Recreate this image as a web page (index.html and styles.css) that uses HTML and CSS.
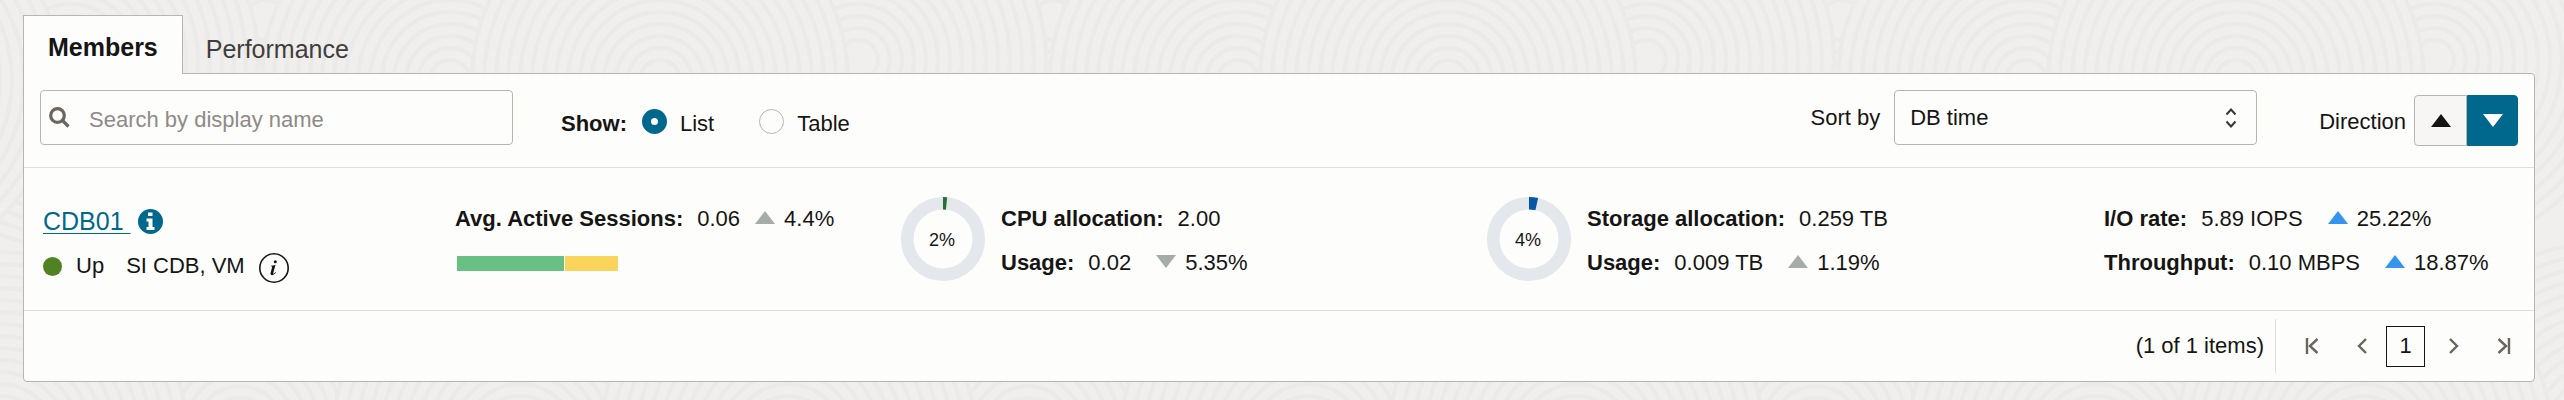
FILE: index.html
```html
<!DOCTYPE html>
<html lang="en">
<head>
<meta charset="utf-8">
<title>Members</title>
<link rel="stylesheet" href="styles.css">
</head>
<body>
<main class="page">
  <div class="tabs" role="tablist">
    <button class="tab tab-active" role="tab" aria-selected="true">Members</button>
    <button class="tab" role="tab" aria-selected="false">Performance</button>
  </div>
  <section class="panel">
    <div class="toolbar">
      <div class="search">
        <svg class="search-icon" viewBox="0 0 21 21" aria-hidden="true"><circle cx="8.500" cy="8.500" r="6.800"/><path d="M13.500 13.500 19.500 19.500"/></svg>
        <input class="search-input" type="text" placeholder="Search by display name" aria-label="Search by display name">
      </div>
      <div class="show" role="radiogroup" aria-labelledby="show-label">
        <span class="bold" id="show-label">Show:</span>
        <label class="option"><input class="radio" type="radio" name="view" checked>List</label>
        <label class="option"><input class="radio" type="radio" name="view">Table</label>
      </div>
      <div class="sort">
        <label for="sort">Sort by</label>
        <div class="select-wrap">
          <select class="select" id="sort"><option>DB time</option></select>
          <svg class="select-icon" viewBox="0 0 12 20" aria-hidden="true"><path d="M1.500 6.500 6 1.500l4.500 5M1.500 13.500l4.500 5 4.500-5"/></svg>
        </div>
      </div>
      <div class="direction">
        <span class="direction-label">Direction</span>
        <div class="toggle">
          <button class="toggle-btn" aria-label="Ascending"><svg class="tri" viewBox="0 0 20 13"><path d="M10 0 20 13H0z"/></svg></button>
          <button class="toggle-btn toggle-on" aria-label="Descending"><svg class="tri" viewBox="0 0 20 13"><path d="M0 0h20L10 13z"/></svg></button>
        </div>
      </div>
    </div>

    <div class="member">
      <div class="identity">
        <div class="name-line">
          <a class="name" href="#">CDB01&nbsp;</a>
          <svg class="info-solid" viewBox="0 0 25 25" aria-hidden="true"><circle cx="12.500" cy="12.500" r="12.500"/><path d="M10 3.500h4.500v3.500H10zM8.500 9.500h6v8.500h2v3h-8v-3h2v-5.500h-2z"/></svg>
        </div>
        <div class="status-line">
          <span class="dot"></span><span class="status">Up</span><span>SI CDB, VM</span>
          <svg class="info-ring" viewBox="0 0 30 30" aria-hidden="true"><circle cx="15" cy="15" r="14.200"/><path d="M12 12.800q2.500-.2 4.500-1.100l-2.200 8q-.3 1.300.6.900.8-.4 1.700-1.700l.6.400q-1.900 2.900-3.900 2.900-2.300-.1-1.700-2.400l1.500-5.500q.2-.9-1.200-1z"/><circle class="info-point" cx="16.300" cy="8.800" r="1.500"/></svg>
        </div>
      </div>
      <div class="metric">
        <div class="line"><span class="bold">Avg. Active Sessions:</span><span class="value">0.06</span><span class="trend trend-near"><svg class="tri gray" viewBox="0 0 20 13"><path d="M10 0 20 13H0z"/></svg>4.4%</span></div>
        <div class="line"><span class="bar"><span class="bar-green"></span><span class="bar-yellow"></span></span></div>
      </div>
      <div class="metric-donut">
        <svg class="donut" viewBox="0 0 84 84" role="img"><circle class="ring" cx="42" cy="42" r="35.700"/><circle class="arc arc-green" cx="42" cy="42" r="35.700" pathLength="100" stroke-dasharray="1.600 98.400" transform="rotate(-90 42 42)"/><text class="donut-text" x="41" y="49">2%</text></svg>
        <div class="metric">
          <div class="line"><span class="bold">CPU allocation:</span><span class="value">2.00</span></div>
          <div class="line"><span class="bold">Usage:</span><span class="value">0.02</span><span class="trend"><svg class="tri gray" viewBox="0 0 20 13"><path d="M0 0h20L10 13z"/></svg>5.35%</span></div>
        </div>
      </div>
      <div class="metric-donut">
        <svg class="donut" viewBox="0 0 84 84" role="img"><circle class="ring" cx="42" cy="42" r="35.700"/><circle class="arc arc-blue" cx="42" cy="42" r="35.700" pathLength="100" stroke-dasharray="3.500 96.500" transform="rotate(-90 42 42)"/><text class="donut-text" x="41" y="49">4%</text></svg>
        <div class="metric">
          <div class="line"><span class="bold">Storage allocation:</span><span class="value">0.259 TB</span></div>
          <div class="line"><span class="bold">Usage:</span><span class="value">0.009 TB</span><span class="trend"><svg class="tri gray" viewBox="0 0 20 13"><path d="M10 0 20 13H0z"/></svg>1.19%</span></div>
        </div>
      </div>
      <div class="metric">
        <div class="line"><span class="bold">I/O rate:</span><span class="value">5.89 IOPS</span><span class="trend"><svg class="tri blue" viewBox="0 0 20 13"><path d="M10 0 20 13H0z"/></svg>25.22%</span></div>
        <div class="line"><span class="bold">Throughput:</span><span class="value">0.10 MBPS</span><span class="trend"><svg class="tri blue" viewBox="0 0 20 13"><path d="M10 0 20 13H0z"/></svg>18.87%</span></div>
      </div>
    </div>

    <nav class="pager" aria-label="Pagination">
      <span class="pager-count">(1 of 1 items)</span>
      <div class="pager-nav">
        <button class="page-btn" aria-label="First page"><svg class="page-icon" viewBox="0 0 14 16"><path d="M3 0v16M13.500 1 6 8l7.500 7"/></svg></button>
        <button class="page-btn" aria-label="Previous page"><svg class="page-icon" viewBox="0 0 14 16"><path d="M12 1 5 8l7 7"/></svg></button>
        <button class="page-current" aria-current="page">1</button>
        <button class="page-btn" aria-label="Next page"><svg class="page-icon" viewBox="0 0 14 16"><path d="M3 1l7 7-7 7"/></svg></button>
        <button class="page-btn" aria-label="Last page"><svg class="page-icon" viewBox="0 0 14 16"><path d="M12 0v16M1.500 1 9 8l-7.500 7"/></svg></button>
      </div>
    </nav>
  </section>
</main>
</body>
</html>
```
FILE: styles.css
```css
* { box-sizing: border-box; }

body {
  margin: 0;
  min-height: 100vh;
  color: #161513;
  font: 22px/44px "Liberation Sans", Arial, sans-serif;
  background-color: #f0efee;
  background-image: url("data:image/svg+xml,%3Csvg xmlns='http://www.w3.org/2000/svg' width='788' height='400' viewBox='0 0 788 400'%3E%3Cdefs%3E%3Cg id='a' fill='none' stroke='%23ebeae9' stroke-width='4'%3E%3Ccircle r='188' fill='%23f0efee'/%3E%3Ccircle r='176'/%3E%3Ccircle r='164'/%3E%3Ccircle r='152'/%3E%3Ccircle r='140'/%3E%3Ccircle r='128'/%3E%3Ccircle r='116'/%3E%3Ccircle r='104'/%3E%3Ccircle r='92'/%3E%3Ccircle r='80'/%3E%3Ccircle r='68'/%3E%3Ccircle r='56'/%3E%3Ccircle r='44'/%3E%3Ccircle r='32'/%3E%3Ccircle r='20'/%3E%3C/g%3E%3C/defs%3E%3Cuse href='%23a' x='265' y='20'/%3E%3Cuse href='%23a' x='70' y='60'/%3E%3Cuse href='%23a' x='450' y='80'/%3E%3Cuse href='%23a' x='858' y='60'/%3E%3Cuse href='%23a' x='660' y='80'/%3E%3Cuse href='%23a' x='-128' y='80'/%3E%3Cuse href='%23a' x='240' y='430'/%3E%3Cuse href='%23a' x='520' y='440'/%3E%3Cuse href='%23a' x='0' y='440'/%3E%3Cuse href='%23a' x='788' y='440'/%3E%3C/svg%3E");
}

button, input, select { font: inherit; color: inherit; margin: 0; }
svg { display: block; flex: none; }
.bold { font-weight: 700; }

.page { padding: 15px 29px 18px 23px; }

.tabs { display: flex; align-items: flex-end; }
.tab {
  height: 58px;
  padding: 10px 23px 0;
  border: 0;
  background: none;
  color: #403e3c;
  font-size: 25px;
  line-height: 32px;
}
.tab-active {
  position: relative;
  height: 59px;
  margin-bottom: -1px;
  padding: 4px 24px 0;
  border: 1px solid #bab5b2;
  border-bottom: 0;
  background: #fdfdfc;
  color: #161513;
  font-weight: 700;
}

.panel {
  border: 1px solid #bab5b2;
  border-radius: 0 4px 4px 4px;
  background: #fdfdfc;
}

.toolbar {
  display: flex;
  align-items: flex-start;
  padding: 16px 16px 21px;
  border-bottom: 1px solid #dfdedd;
}
.search {
  display: flex;
  align-items: center;
  gap: 19px;
  width: 473px;
  height: 55px;
  padding-left: 8px;
  border: 1px solid #bab5b2;
  border-radius: 4px;
}
.search-icon { width: 21px; height: 21px; fill: none; stroke: #6b645f; stroke-width: 3.200; }
.search-input { flex: 1; min-width: 0; padding: 4px 0 0; border: 0; outline: 0; background: none; }
.search-input::placeholder { color: #8f8a86; opacity: 1; }

.show {
  display: flex;
  align-items: center;
  margin: 14px 0 0 48px;
  line-height: 40px;
}
.option { display: flex; align-items: center; gap: 13px; margin-left: 15px; }
.option + .option { margin-left: 45px; }
.radio {
  appearance: none;
  width: 25px;
  height: 25px;
  margin-bottom: 6px;
  border: 1px solid #bab5b2;
  border-radius: 50%;
  background: #fdfdfc;
}
.radio:checked { border: 9px solid #00688c; }

.sort { display: flex; align-items: center; gap: 14px; margin-left: auto; }
.select-wrap { position: relative; width: 363px; }
.select {
  display: block;
  appearance: none;
  width: 100%;
  height: 55px;
  padding: 0 40px 0 15px;
  border: 1px solid #bab5b2;
  border-radius: 4px;
  background: #fdfdfc;
}
.select-icon {
  position: absolute;
  top: 18px;
  right: 20px;
  width: 12px;
  height: 20px;
  fill: none;
  stroke: #3a3633;
  stroke-width: 2;
  pointer-events: none;
}

.direction { display: flex; align-items: center; gap: 8px; margin: 5px 0 0 62px; }
.direction-label { padding-top: 3px; }
.toggle { display: flex; }
.toggle-btn {
  display: flex;
  align-items: center;
  justify-content: center;
  width: 53px;
  height: 51px;
  padding: 0;
  border: 1px solid #bab5b2;
  border-radius: 4px 0 0 4px;
  background: #f8f6f5;
}
.toggle-on {
  width: 51px;
  border-color: #00688c;
  border-radius: 0 4px 4px 0;
  background: #00688c;
  color: #fff;
}
.tri { width: 20px; height: 13px; fill: currentColor; }
.gray { color: #a6aca7; }
.blue { color: #3395ee; }

.member {
  display: grid;
  grid-template-columns: 412fr 446fr 586fr 617fr 430fr;
  padding: 29px 0 23px 19px;
  border-bottom: 1px solid #dfdedd;
}
.name-line, .status-line { display: flex; align-items: center; white-space: nowrap; }
.name-line { gap: 7px; height: 48px; }
.name { color: #00688c; font-size: 25px; text-underline-offset: 3px; text-decoration-thickness: 1px; }
.info-solid { width: 25px; height: 25px; fill: #00688c; }
.info-solid path { fill: #fdfdfc; }
.status-line { height: 42px; }
.dot { width: 19px; height: 19px; margin-right: 14px; border-radius: 50%; background: #508223; }
.status { margin-right: 22px; }
.info-ring { width: 30px; height: 30px; margin: 3px 0 0 14px; }
.info-ring circle { fill: none; stroke: #161513; stroke-width: 1.600; }
.info-ring path, .info-ring .info-point { fill: #161513; stroke: none; }

.line { display: flex; align-items: center; height: 44px; white-space: nowrap; }
.value { margin-left: 14px; }
.trend { display: flex; align-items: center; gap: 9px; margin-left: 25px; }
.trend-near { margin-left: 15px; }
.trend .tri { margin-bottom: 4px; }
.bar { display: flex; gap: 1px; margin-left: 2px; }
.bar-green, .bar-yellow { width: 107px; height: 15px; background: #68c182; }
.bar-yellow { width: 53px; background: #fad55c; }

.metric-donut { display: flex; gap: 16px; }
.donut { width: 84px; height: 84px; }
.ring, .arc { fill: none; stroke: #e4e8ec; stroke-width: 12.600; }
.arc-green { stroke: #277034; }
.arc-blue { stroke: #0857a6; }
.donut-text { font-size: 18px; fill: #161513; text-anchor: middle; }

.pager { display: flex; justify-content: flex-end; padding: 8px 5px 8px; }
.pager-count { padding-right: 11px; line-height: 54px; }
.pager-nav { display: flex; align-items: center; height: 54px; padding-left: 10px; border-left: 1px solid #dfdedd; }
.page-btn, .page-current {
  display: flex;
  align-items: center;
  justify-content: center;
  width: 50px;
  height: 41px;
  padding: 0;
  border: 0;
  background: none;
}
.page-current { width: 39px; margin-right: 4px; border: 1px solid #161513; }
.page-icon { width: 14px; height: 16px; fill: none; stroke: #6b645f; stroke-width: 2.400; }
```
